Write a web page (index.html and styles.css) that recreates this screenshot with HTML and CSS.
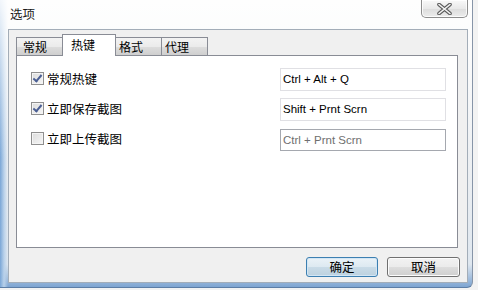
FILE: index.html
```html
<!DOCTYPE html>
<html lang="zh-CN">

<head>
    <meta charset="UTF-8">
    <title>选项</title>
    <link rel="stylesheet" href="styles.css">
</head>

<body>
    <div class="window">
        <div class="titlebar">
            <span class="title">选项</span>
            <button class="close" title="关闭">
                <svg width="17" height="12" viewBox="0 0 17 12">
                    <path d="M3 1.5 L14 10.5 M14 1.5 L3 10.5" stroke="#5b5b5b" stroke-width="3.6" stroke-linecap="round" fill="none"/>
                    <path d="M3 1.5 L14 10.5 M14 1.5 L3 10.5" stroke="#f4f4f4" stroke-width="1.6" stroke-linecap="round" fill="none"/>
                </svg>
            </button>
        </div>

        <div class="client">
            <div class="tabs">
                <div class="tab tab-1">常规</div>
                <div class="tab tab-2 active">热键</div>
                <div class="tab tab-3">格式</div>
                <div class="tab tab-4">代理</div>
            </div>

            <div class="panel">
                <div class="row">
                    <label class="option"><span class="check on"></span>常规热键</label>
                    <div class="hotkey">Ctrl + Alt + Q</div>
                </div>
                <div class="row">
                    <label class="option"><span class="check on"></span>立即保存截图</label>
                    <div class="hotkey">Shift + Prnt Scrn</div>
                </div>
                <div class="row">
                    <label class="option"><span class="check"></span>立即上传截图</label>
                    <div class="hotkey off">Ctrl + Prnt Scrn</div>
                </div>
            </div>

            <div class="buttons">
                <button class="btn default">确定</button>
                <button class="btn">取消</button>
            </div>
        </div>
    </div>
</body>

</html>
```

FILE: styles.css
```css
body {
    margin: 0;
    padding: 0;
    width: 478px;
    height: 290px;
    overflow: hidden;
    background: #f3f3f3;
    font-family: "Noto Sans CJK SC", "Liberation Sans", sans-serif;
    font-size: 12px;
    color: #000;
}

.window {
    width: 473px;
    height: 288px;
    box-sizing: border-box;
    border-right: 1px solid #8795a8;
    border-bottom: 1px solid #5d7ea6;
    border-bottom-right-radius: 6px;
    background:
        linear-gradient(to bottom, rgba(255, 255, 255, 0.9) 0, rgba(255, 255, 255, 0) 55%),
        linear-gradient(to right, #7aa6d6 0, #b9d1ea 4px, rgba(255, 255, 255, 0) 8px),
        linear-gradient(to bottom, #f6f7f8 0, #eceff2 60%, #dfe7ef 92%, #7ea5d2 100%);
}

.titlebar {
    height: 29px;
    display: flex;
    justify-content: space-between;
    align-items: flex-start;
}

.title {
    padding: 4px 0 0 10px;
    font-size: 12.5px;
    color: #1b1b1b;
}

.close {
    width: 47px;
    height: 18px;
    margin-right: 4px;
    padding: 0;
    border: 1px solid #8d8d8d;
    border-top: none;
    border-radius: 0 0 5px 5px;
    background: linear-gradient(to bottom, #f9f9f9, #e9e9e9 50%, #dcdcdc 51%, #ececec);
    box-shadow: inset 0 0 0 1px rgba(255, 255, 255, 0.8);
    display: flex;
    align-items: center;
    justify-content: center;
}

.client {
    margin-left: 8px;
    width: 460px;
    height: 254px;
    box-sizing: border-box;
    border: 1px solid #a3adb8;
    background: #f0f0f0;
    padding: 4px 9px 0 7px;
}

.tabs {
    display: flex;
    align-items: flex-end;
    height: 21px;
    position: relative;
    z-index: 1;
}

.tab {
    box-sizing: border-box;
    height: 18px;
    width: 47px;
    margin-right: -1px;
    padding: 1px 0 0 6px;
    border: 1px solid #898c95;
    border-bottom: none;
    background: linear-gradient(to bottom, #f3f3f3, #ebebeb 50%, #dddddd 51%, #cfcfcf);
    line-height: 15px;
}

.tab-2 {
    width: 54px;
    padding-left: 8px;
}

.tab-3,
.tab-4 {
    padding-left: 3px;
}

.tab.active {
    height: 22px;
    margin-bottom: -1px;
    background: #fff;
    padding-top: 2px;
}

.panel {
    height: 193px;
    box-sizing: border-box;
    border: 1px solid #898c95;
    background: #fff;
    padding: 12px 11px 0 14px;
    display: flex;
    flex-direction: column;
    gap: 7px;
}

.row {
    display: flex;
    justify-content: space-between;
    align-items: center;
    height: 23px;
}

.option {
    display: flex;
    align-items: center;
    gap: 3px;
    margin-top: -2px;
    font-size: 12.5px;
}

.check {
    width: 13px;
    height: 13px;
    box-sizing: border-box;
    border: 1px solid #8f8f8f;
    background: linear-gradient(135deg, #dcdcdc, #f6f6f6);
    box-shadow: inset 0 0 0 1px #f4f4f4;
    position: relative;
}

.check.on::after {
    content: "";
    position: absolute;
    left: 3px;
    top: 0px;
    width: 3px;
    height: 7px;
    border-right: 2px solid #4b5f94;
    border-bottom: 2px solid #4b5f94;
    transform: rotate(40deg);
}

.hotkey {
    width: 166px;
    height: 23px;
    box-sizing: border-box;
    border: 1px solid #e0e0e4;
    padding-left: 2px;
    font-family: "Liberation Sans", sans-serif;
    font-size: 11.5px;
    line-height: 21px;
}

.hotkey.off {
    height: 22px;
    border-color: #a5a8af;
    color: #6f6f6f;
    line-height: 20px;
}

.buttons {
    display: flex;
    justify-content: flex-end;
    gap: 9px;
    margin-right: -2px;
    margin-top: 9px;
}

.btn {
    width: 73px;
    height: 20px;
    padding: 0;
    border: 1px solid #707070;
    border-radius: 3px;
    background: linear-gradient(to bottom, #f2f2f2, #ebebeb 50%, #dddddd 51%, #cfcfcf);
    box-shadow: inset 0 0 0 1px #fcfcfc;
    font-family: "Noto Sans CJK SC", sans-serif;
    font-size: 12.5px;
    color: #000;
    line-height: 16px;
}

.btn.default {
    width: 72px;
    border-color: #3c7fb1;
    background: linear-gradient(to bottom, #eaf2f7, #dde9f1 50%, #c9dbe7 51%, #bcd1df);
    box-shadow: inset 0 0 0 1px #d2e6f5;
}
```
